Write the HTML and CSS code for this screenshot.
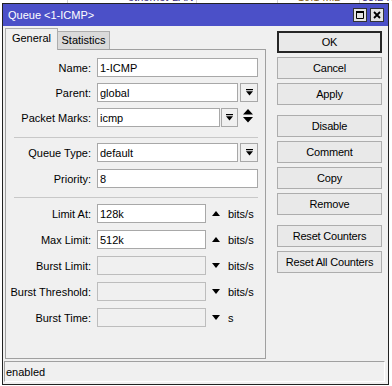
FILE: index.html
```html
<!DOCTYPE html>
<html lang="en">
<head>
    <meta charset="UTF-8">
    <meta name="viewport" content="width=device-width, initial-scale=1.0">
    <title>Queue &lt;1-ICMP&gt;</title>
    <link rel="stylesheet" href="styles.css">
</head>
<body>
    <div class="desk">
        <div class="desk-row">
            <span class="dc c1"></span>
            <span class="dc c2">ethernet-LAN</span>
            <span class="dc c3"></span>
            <span class="dc c4">10.1 MiB</span>
            <span class="dc c5">83.2 Kbps</span>
        </div>
    </div>

    <div class="window">
        <div class="titlebar">
            <span class="title">Queue &lt;1-ICMP&gt;</span>
            <div class="title-buttons">
                <div class="tbtn">
                    <svg width="8" height="8" viewBox="0 0 8 8"><path d="M0.5 0.5h7v7h-7z" fill="none" stroke="#000"/><rect x="0" y="0" width="8" height="2" fill="#000"/></svg>
                </div>
                <div class="tbtn">
                    <svg width="8" height="8" viewBox="0 0 8 8"><path d="M1 1L7 7M7 1L1 7" stroke="#000" stroke-width="1.8"/></svg>
                </div>
            </div>
        </div>

        <div class="main">
            <div class="left">
                <div class="tabs">
                    <div class="tab active">General</div>
                    <div class="tab">Statistics</div>
                </div>
                <div class="panel">
                    <div class="group g1">
                        <div class="row">
                            <label>Name:</label>
                            <input class="input w-full" value="1-ICMP">
                        </div>
                        <div class="row">
                            <label>Parent:</label>
                            <input class="input w-combo" value="global">
                            <div class="drop">
                                <svg width="7" height="7" viewBox="0 0 7 7"><rect x="0" y="0" width="7" height="1.2" fill="#000"/><path d="M0 2.2h7L3.5 6.5z" fill="#000"/></svg>
                            </div>
                        </div>
                        <div class="row">
                            <label>Packet Marks:</label>
                            <input class="input w-marks" value="icmp">
                            <div class="drop drop-s">
                                <svg width="7" height="7" viewBox="0 0 7 7"><rect x="0" y="0" width="7" height="1.2" fill="#000"/><path d="M0 2.2h7L3.5 6.5z" fill="#000"/></svg>
                            </div>
                            <svg class="updown" width="10" height="14" viewBox="0 0 10 14"><path d="M5 0L10 5.5H0z M0 8h10L5 13.5z" fill="#000"/></svg>
                        </div>
                    </div>

                    <div class="sep sep1"></div>

                    <div class="group g2">
                        <div class="row">
                            <label>Queue Type:</label>
                            <input class="input w-combo" value="default">
                            <div class="drop">
                                <svg width="7" height="7" viewBox="0 0 7 7"><rect x="0" y="0" width="7" height="1.2" fill="#000"/><path d="M0 2.2h7L3.5 6.5z" fill="#000"/></svg>
                            </div>
                        </div>
                        <div class="row">
                            <label>Priority:</label>
                            <input class="input w-full" value="8">
                        </div>
                    </div>

                    <div class="sep sep2"></div>

                    <div class="group g3">
                        <div class="row">
                            <label>Limit At:</label>
                            <input class="input w-rate" value="128k">
                            <svg class="tri" width="8" height="5" viewBox="0 0 8 5"><path d="M4 0L8 5H0z" fill="#000"/></svg>
                            <span class="unit">bits/s</span>
                        </div>
                        <div class="row">
                            <label>Max Limit:</label>
                            <input class="input w-rate" value="512k">
                            <svg class="tri" width="8" height="5" viewBox="0 0 8 5"><path d="M4 0L8 5H0z" fill="#000"/></svg>
                            <span class="unit">bits/s</span>
                        </div>
                        <div class="row">
                            <label>Burst Limit:</label>
                            <input class="input w-rate off" value="">
                            <svg class="tri" width="8" height="5" viewBox="0 0 8 5"><path d="M0 0h8L4 5z" fill="#000"/></svg>
                            <span class="unit">bits/s</span>
                        </div>
                        <div class="row">
                            <label>Burst Threshold:</label>
                            <input class="input w-rate off" value="">
                            <svg class="tri" width="8" height="5" viewBox="0 0 8 5"><path d="M0 0h8L4 5z" fill="#000"/></svg>
                            <span class="unit">bits/s</span>
                        </div>
                        <div class="row">
                            <label>Burst Time:</label>
                            <input class="input w-rate off" value="">
                            <svg class="tri" width="8" height="5" viewBox="0 0 8 5"><path d="M0 0h8L4 5z" fill="#000"/></svg>
                            <span class="unit">s</span>
                        </div>
                    </div>
                </div>
            </div>

            <div class="actions">
                <div class="btn-group">
                    <button class="btn default">OK</button>
                    <button class="btn">Cancel</button>
                    <button class="btn">Apply</button>
                </div>
                <div class="btn-group">
                    <button class="btn">Disable</button>
                    <button class="btn">Comment</button>
                    <button class="btn">Copy</button>
                    <button class="btn">Remove</button>
                </div>
                <div class="btn-group">
                    <button class="btn">Reset Counters</button>
                    <button class="btn">Reset All Counters</button>
                </div>
            </div>
        </div>

        <div class="status">enabled</div>
    </div>
</body>
</html>
```

FILE: styles.css
```css
body {
    margin: 0;
    width: 392px;
    height: 386px;
    overflow: hidden;
    position: relative;
    background-color: #fff;
    font-family: "Liberation Sans", Arial, sans-serif;
    font-size: 11px;
    color: #000;
}
.desk-row {
    display: flex;
    height: 12px;
    margin-top: -9px;
    line-height: 12px;
    white-space: nowrap;
}
.dc {
    box-sizing: border-box;
    border-right: 1px solid #d4d4d4;
    color: #3b2d7e;
    overflow: hidden;
}
.c1 { width: 68px; }
.c2 { width: 129px; padding-left: 60px; }
.c3 { width: 81px; }
.c4 { width: 82px; padding-left: 20px; color: #8a6418; }
.c5 { flex: 1; padding-left: 2px; border-right: none; }

.window {
    position: absolute;
    left: 2px;
    top: 3px;
    width: 387px;
    height: 382px;
    box-sizing: border-box;
    border: 1px solid #222;
    background-color: #f0f0f0;
    display: flex;
    flex-direction: column;
}
.titlebar {
    height: 22px;
    flex-shrink: 0;
    background-color: #4b50c8;
    color: #fff;
    display: flex;
    align-items: center;
    padding-left: 5px;
}
.title {
    flex: 1;
}
.title-buttons {
    display: flex;
    gap: 3px;
    margin-right: 4px;
}
.tbtn {
    width: 14px;
    height: 14px;
    box-sizing: border-box;
    border: 1px solid #333;
    background-color: #e4e4e4;
    display: flex;
    align-items: center;
    justify-content: center;
}

.main {
    display: flex;
    height: 333px;
    flex-shrink: 0;
}
.left {
    margin-left: 2px;
    width: 261px;
    display: flex;
    flex-direction: column;
}
.tabs {
    display: flex;
    align-items: flex-end;
    height: 21px;
    margin-top: 2px;
}
.tab {
    width: 53px;
    height: 18px;
    box-sizing: border-box;
    border: 1px solid #adadad;
    border-bottom: none;
    background-color: #dadada;
    text-align: center;
    line-height: 17px;
    margin-left: -1px;
}
.tab.active {
    height: 22px;
    margin-left: 0;
    margin-bottom: -1px;
    line-height: 19px;
    background-color: #f0f0f0;
    position: relative;
    z-index: 1;
}
.panel {
    flex: 1;
    box-sizing: border-box;
    border: 1px solid #a0a0a0;
    padding-top: 8px;
}
.group {
    display: flex;
    flex-direction: column;
    gap: 7px;
}
.g1 {
    gap: 6px;
}
.row {
    display: flex;
    align-items: center;
    height: 19px;
}
.row label {
    width: 85px;
    margin-right: 6px;
    text-align: right;
    white-space: nowrap;
}
.input {
    height: 19px;
    box-sizing: border-box;
    border: 1px solid #a8a8a8;
    background-color: #fff;
    padding: 0 2px;
    margin: 0;
    font: inherit;
    color: #000;
    outline: none;
}
.input.off {
    background-color: #f0f0f0;
    border-color: #bdbdbd;
}
.w-full { width: 161px; }
.w-combo { width: 141px; }
.w-marks { width: 123px; }
.w-rate { width: 109px; }
.drop {
    width: 18px;
    height: 19px;
    box-sizing: border-box;
    margin-left: 2px;
    border: 1px solid #a8a8a8;
    background-color: #f0f0f0;
    display: flex;
    align-items: center;
    justify-content: center;
}
.drop-s {
    width: 17px;
    margin-left: 1px;
}
.updown {
    margin-left: 5px;
    margin-top: -3px;
}
.tri {
    margin-left: 6px;
    margin-top: -1px;
}
.unit {
    margin-left: 8px;
}
.sep {
    border-top: 1px solid #c8c8c8;
    margin-left: 8px;
    margin-right: 7px;
}
.sep1 {
    margin-top: 10px;
    margin-bottom: 5px;
}
.sep2 {
    margin-top: 9px;
    margin-bottom: 6px;
}

.actions {
    margin-left: 11px;
    width: 105px;
    padding-top: 5px;
    display: flex;
    flex-direction: column;
    gap: 10px;
}
.btn-group {
    display: flex;
    flex-direction: column;
    gap: 4px;
}
.btn {
    height: 22px;
    box-sizing: border-box;
    border: 1px solid #adadad;
    background-color: #e9e9e9;
    font: inherit;
    color: #000;
    padding: 0;
    letter-spacing: -0.2px;
}
.btn.default {
    border: 2px solid #262626;
}

.status {
    margin: 2px 0 0 1px;
    width: 381px;
    height: 21px;
    box-sizing: border-box;
    border: 1px solid;
    border-color: #a0a0a0 #fff #fff #a0a0a0;
    padding-left: 1px;
    display: flex;
    align-items: center;
}
```
